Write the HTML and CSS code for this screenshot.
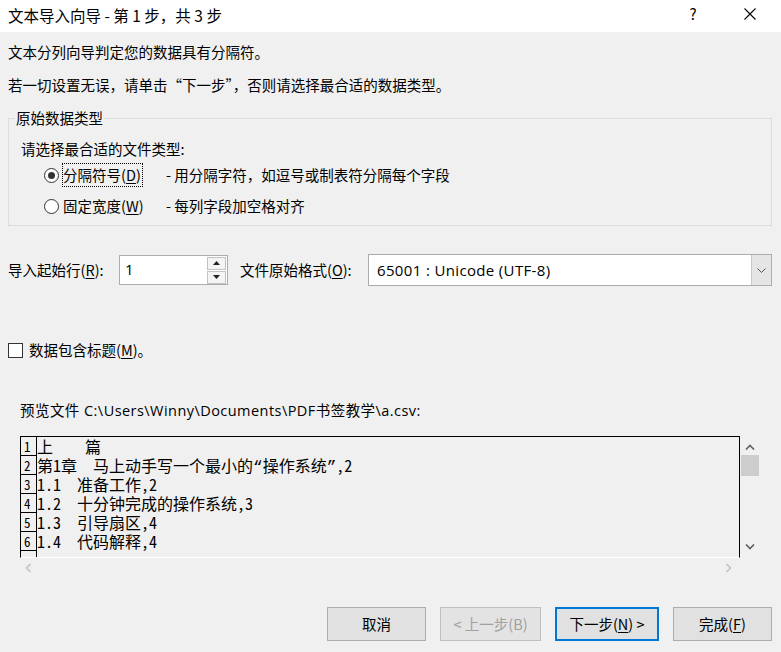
FILE: index.html
```html
<!DOCTYPE html>
<html lang="zh-CN">
<head>
<meta charset="utf-8">
<title>文本导入向导</title>
<link rel="stylesheet" href="styles.css">
</head>
<body>
<div class="window">
  <header class="titlebar">
    <span class="title">文本导入向导 - 第 1 步，共 3 步</span>
    <span class="help">?</span>
    <svg class="close" width="12" height="12" viewBox="0 0 12 12"><path d="M0.5 0.5L11.5 11.5M11.5 0.5L0.5 11.5" stroke="#000" stroke-width="1.1" fill="none"/></svg>
  </header>
  <main class="content">
    <p class="intro intro-first">文本分列向导判定您的数据具有分隔符。</p>
    <p class="intro intro-second">若一切设置无误，请单击“下一步”，否则请选择最合适的数据类型。</p>

    <fieldset class="group">
      <legend class="group-title">原始数据类型</legend>
      <div class="prompt">请选择最合适的文件类型:</div>
      <div class="radio-row">
        <span class="radio checked"></span>
        <span class="radio-label-cell"><span class="radio-label focused">分隔符号(<u>D</u>)</span></span>
        <span class="radio-desc">- 用分隔字符，如逗号或制表符分隔每个字段</span>
      </div>
      <div class="radio-row">
        <span class="radio"></span>
        <span class="radio-label-cell"><span class="radio-label">固定宽度(<u>W</u>)</span></span>
        <span class="radio-desc">- 每列字段加空格对齐</span>
      </div>
    </fieldset>

    <div class="options-row">
      <span class="opt-label start-label">导入起始行(<u>R</u>):</span>
      <div class="spin">
        <span class="spin-value">1</span>
        <div class="spin-buttons">
          <span class="spin-btn"><svg width="7" height="4" viewBox="0 0 7 4"><polygon points="3.5,0 7,4 0,4" fill="#222"/></svg></span>
          <span class="spin-btn"><svg width="7" height="4" viewBox="0 0 7 4"><polygon points="0,0 7,0 3.5,4" fill="#222"/></svg></span>
        </div>
      </div>
      <span class="opt-label origin-label">文件原始格式(<u>O</u>):</span>
      <div class="select">
        <span class="select-value">65001 : Unicode (UTF-8)</span>
        <span class="select-btn"><svg width="9" height="5" viewBox="0 0 9 5"><polyline points="0.5,0.5 4.5,4.5 8.5,0.5" fill="none" stroke="#555" stroke-width="1"/></svg></span>
      </div>
    </div>

    <div class="checkbox-row">
      <span class="checkbox"></span>
      <span class="checkbox-label">数据包含标题(<u>M</u>)。</span>
    </div>

    <div class="preview-label">预览文件 C:\Users\Winny\Documents\PDF书签教学\a.csv:</div>

    <div class="preview">
      <div class="preview-text">
        <div class="prow"><span class="pnum">1</span><span class="ptext">上    篇</span></div>
        <div class="prow"><span class="pnum">2</span><span class="ptext">第1章  马上动手写一个最小的<span class="q">“</span>操作系统<span class="q">”</span>,2</span></div>
        <div class="prow"><span class="pnum">3</span><span class="ptext">1.1  准备工作,2</span></div>
        <div class="prow"><span class="pnum">4</span><span class="ptext">1.2  十分钟完成的操作系统,3</span></div>
        <div class="prow"><span class="pnum">5</span><span class="ptext">1.3  引导扇区,4</span></div>
        <div class="prow"><span class="pnum">6</span><span class="ptext">1.4  代码解释,4</span></div>
        <div class="prow"><span class="pnum"></span><span class="ptext"></span></div>
      </div>
      <div class="vscroll">
        <svg class="vs-arrow" width="10" height="6" viewBox="0 0 10 6"><polyline points="1,5.5 5,1.5 9,5.5" fill="none" stroke="#606060" stroke-width="1.6"/></svg>
        <span class="vs-thumb"></span>
        <span class="vs-track"></span>
        <svg class="vs-arrow" width="10" height="6" viewBox="0 0 10 6"><polyline points="1,0.5 5,4.5 9,0.5" fill="none" stroke="#606060" stroke-width="1.6"/></svg>
      </div>
      <div class="hscroll">
        <svg width="6" height="10" viewBox="0 0 6 10"><polyline points="5.5,1 1.5,5 5.5,9" fill="none" stroke="#c2c2c2" stroke-width="1.6"/></svg>
        <svg width="6" height="10" viewBox="0 0 6 10"><polyline points="0.5,1 4.5,5 0.5,9" fill="none" stroke="#c2c2c2" stroke-width="1.6"/></svg>
      </div>
    </div>

    <div class="buttons">
      <button class="btn btn-cancel">取消</button>
      <button class="btn btn-prev" disabled>&lt; 上一步(B)</button>
      <button class="btn btn-next">下一步(<u>N</u>) &gt;</button>
      <button class="btn btn-finish">完成(<u>F</u>)</button>
    </div>
  </main>
</div>
</body>
</html>
```

FILE: styles.css
```css
* { box-sizing: border-box; }

html, body {
  margin: 0;
  padding: 0;
}

body {
  width: 781px;
  height: 652px;
  overflow: hidden;
  background: #f0f0f0;
  font-family: "Noto Sans CJK SC", "Noto Sans", sans-serif;
  font-size: 14.5px;
  line-height: 20px;
  color: #000;
}

u {
  text-decoration-thickness: 1px;
  text-underline-offset: 2px;
}

/* title bar */
.titlebar {
  height: 32px;
  background: #fff;
  display: flex;
  align-items: center;
  padding-left: 8px;
  padding-right: 25px;
}
.title {
  flex: 1;
  font-size: 15.5px;
  margin-top: -3px;
}
.help {
  width: 20px;
  text-align: center;
  font-size: 15px;
  margin-top: -5px;
  margin-right: 41px;
}
.close {
  margin-top: -4px;
}

/* content */
.content {
  padding: 0 9px 0 8px;
}
.intro {
  margin: 0;
}
.intro-first { margin-top: 10px; }
.intro-second { margin-top: 13px; }

.group {
  margin: 13px 0 0;
  min-width: 0;
  border: 1px solid #dcdcdc;
  padding: 0 0 6px 6px;
}
.group-title {
  padding: 0 1px;
}
.prompt {
  margin: 11px 0 0 6px;
}
.radio-row {
  display: flex;
  align-items: center;
  height: 26px;
  margin-left: 29px;
}
.prompt + .radio-row { margin-top: 3px; }
.radio-row + .radio-row { margin-top: 5px; }

.radio {
  width: 15px;
  height: 15px;
  border: 1px solid #333;
  border-radius: 50%;
  background: #fff;
  display: flex;
  align-items: center;
  justify-content: center;
  flex: none;
}
.radio.checked::after {
  content: "";
  width: 7px;
  height: 7px;
  border-radius: 50%;
  background: #333;
}
.radio-label-cell {
  width: 107px;
  padding-left: 3px;
}
.radio-label {
  display: inline-block;
  border: 1px dotted transparent;
  padding: 0 1px 0 0;
  line-height: 22px;
}
.radio-label.focused {
  border-color: #000;
}

/* options row */
.options-row {
  display: flex;
  align-items: center;
  height: 32px;
  margin-top: 28px;
}
.start-label {
  width: 111px;
}
.spin {
  width: 109px;
  height: 30px;
  border: 1px solid #acacac;
  background: #fff;
  display: flex;
  align-items: center;
  padding: 0 0 0 5px;
}
.spin-value {
  flex: 1;
  font-family: "Open Sans", sans-serif;
  font-size: 15px;
  margin-top: -3px;
}
.spin-buttons {
  display: flex;
  flex-direction: column;
  gap: 1px;
  margin-right: 1px;
}
.spin-btn {
  width: 19px;
  height: 13px;
  border: 1px solid #c2c2c2;
  background: #f4f4f4;
  display: flex;
  align-items: center;
  justify-content: center;
}
.origin-label {
  margin-left: 12px;
  width: 128px;
}
.select {
  width: 404px;
  height: 32px;
  border: 1px solid #acacac;
  background: #fff;
  display: flex;
  align-items: center;
  padding-left: 8px;
}
.select-value {
  flex: 1;
  font-family: "Open Sans", sans-serif;
  font-size: 15px;
  letter-spacing: 0.35px;
}
.select-btn {
  width: 20px;
  height: 30px;
  background: #e5e5e5;
  border-left: 1px solid #c8c8c8;
  display: flex;
  align-items: center;
  justify-content: center;
}

/* checkbox */
.checkbox-row {
  display: flex;
  align-items: center;
  margin-top: 54px;
  height: 20px;
}
.checkbox {
  width: 15px;
  height: 15px;
  border: 1px solid #333;
  background: #fff;
  flex: none;
}
.checkbox-label {
  margin-left: 6px;
}

/* preview */
.preview-label {
  margin-top: 41px;
  padding-left: 12px;
  font-family: "Open Sans", "Noto Sans CJK SC", sans-serif;
  letter-spacing: 0.45px;
}
.preview {
  margin: 15px 0 0 12px;
  display: grid;
  grid-template-columns: 720px 20px;
  grid-template-rows: 122px 20px;
}
.preview-text {
  border-top: 1px solid #000;
  border-left: 1px solid #000;
  border-right: 1px solid #000;
  border-bottom: 1px solid #fff;
  overflow: hidden;
  font-family: "Noto Sans Mono CJK SC", "Noto Sans CJK SC", monospace;
  font-size: 16px;
}
.prow {
  display: flex;
  height: 19px;
  line-height: 19px;
}
.pnum {
  width: 16px;
  flex: none;
  border-right: 1px solid #000;
  border-bottom: 1px solid #000;
  padding: 2px 0 0 3px;
  font-size: 13px;
  line-height: 16px;
}
.ptext {
  white-space: pre;
  line-height: 19px;
}
.q {
  font-family: "Liberation Mono", monospace;
}
.vscroll {
  display: flex;
  flex-direction: column;
  align-items: center;
  padding-top: 8px;
}
.vs-thumb {
  width: 18px;
  height: 21px;
  background: #cdcdcd;
  margin-top: 5px;
}
.vs-track {
  flex: 1;
}
.vs-arrow {
  flex: none;
}
.vscroll .vs-arrow:last-child {
  margin-bottom: 8px;
}
.hscroll {
  display: flex;
  justify-content: space-between;
  align-items: center;
  padding: 0 8px 0 5px;
}

/* buttons */
.buttons {
  display: flex;
  justify-content: flex-end;
  gap: 14px;
  margin-top: 29px;
}
.btn {
  height: 34px;
  font-family: "Noto Sans CJK SC", "Noto Sans", sans-serif;
  font-size: 14.5px;
  color: #000;
  background: #e1e1e1;
  border: 1px solid #adadad;
  padding: 0 0 2px;
  margin: 0;
}
.btn-cancel { width: 99px; }
.btn-prev {
  width: 101px;
  color: #a0a0a0;
  border-color: #bfbfbf;
  background: #e3e3e3;
}
.btn-next {
  width: 104px;
  border: 2px solid #0078d7;
}
.btn-finish { width: 99px; }
```
